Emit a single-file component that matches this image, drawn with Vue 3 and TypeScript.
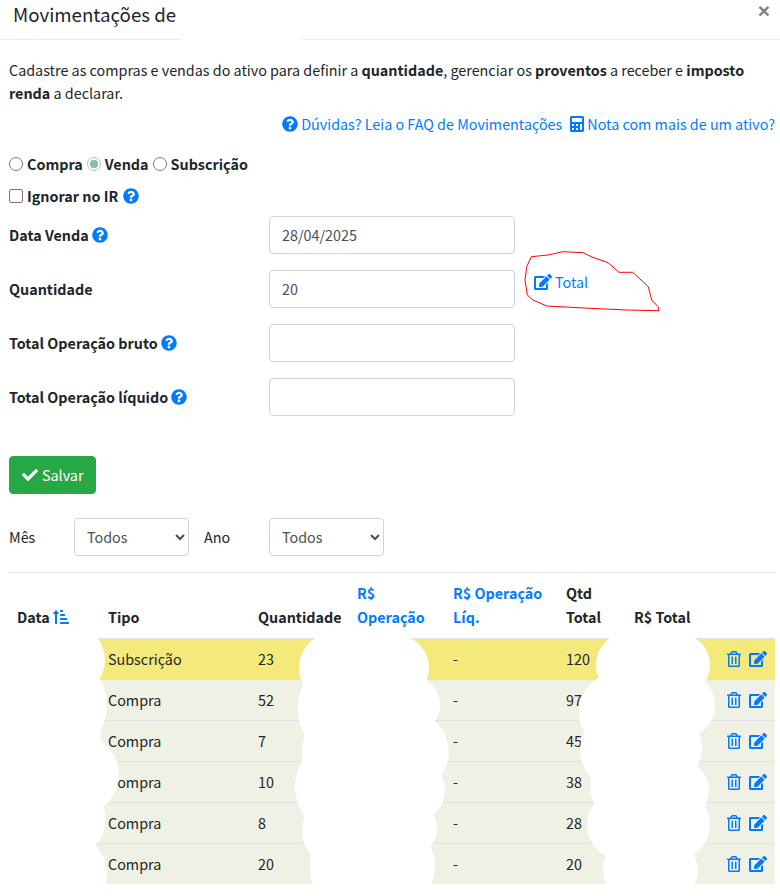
<script setup lang="ts">
interface Row { tipo: string; qtd: string; total: string; highlight?: boolean }
interface Circle { cx: number; cy: number; r: number }
const rows: Row[] = [
  { tipo: 'Subscrição', qtd: '23', total: '120', highlight: true },
  { tipo: 'Compra', qtd: '52', total: '97' },
  { tipo: 'Compra', qtd: '7', total: '45' },
  { tipo: 'Compra', qtd: '10', total: '38' },
  { tipo: 'Compra', qtd: '8', total: '28' },
  { tipo: 'Compra', qtd: '20', total: '20' },
]
const question = 'M504 256c0 136.997-111.043 248-248 248S8 392.997 8 256C8 119.083 119.043 8 256 8s248 111.083 248 248zM262.655 90c-54.497 0-89.255 22.957-116.549 63.758-3.536 5.286-2.353 12.415 2.715 16.258l34.699 26.31c5.205 3.947 12.621 3.008 16.665-2.122 17.864-22.658 30.113-35.797 57.303-35.797 20.429 0 45.698 13.148 45.698 32.958 0 14.976-12.363 22.667-32.534 33.976C247.128 238.528 216 254.941 216 296v4c0 6.627 5.373 12 12 12h56c6.627 0 12-5.373 12-12v-1.333c0-28.462 83.186-29.647 83.186-106.667 0-58.002-60.165-102-116.531-102zM256 338c-25.365 0-46 20.635-46 46 0 25.364 20.635 46 46 46s46-20.636 46-46c0-25.365-20.635-46-46-46z'
const edit = 'M402.6 83.2l90.2 90.2c3.8 3.8 3.8 10 0 13.8L274.4 405.6l-92.8 10.3c-12.4 1.4-22.9-9.1-21.5-21.5l10.3-92.8L388.8 83.2c3.8-3.8 10-3.8 13.8 0zm162-22.9l-48.8-48.8c-15.2-15.2-39.9-15.2-55.2 0l-35.4 35.4c-3.8 3.8-3.8 10 0 13.8l90.2 90.2c3.8 3.8 10 3.8 13.8 0l35.4-35.4c15.2-15.3 15.2-40 0-55.2zM384 346.2V448H64V128h229.8c3.2 0 6.2-1.3 8.5-3.5l40-40c7.6-7.6 2.2-20.5-8.5-20.5H48C21.5 64 0 85.5 0 112v352c0 26.5 21.5 48 48 48h352c26.5 0 48-21.5 48-48V306.2c0-10.7-12.9-16-20.5-8.5l-40 40c-2.2 2.3-3.5 5.3-3.5 8.5z'
const trash = 'M268 416h24a12 12 0 0 0 12-12V188a12 12 0 0 0-12-12h-24a12 12 0 0 0-12 12v216a12 12 0 0 0 12 12zM432 80h-82.41l-34-56.7A48 48 0 0 0 274.41 0H173.59a48 48 0 0 0-41.16 23.3L98.41 80H16A16 16 0 0 0 0 96v16a16 16 0 0 0 16 16h16v336a48 48 0 0 0 48 48h288a48 48 0 0 0 48-48V128h16a16 16 0 0 0 16-16V96a16 16 0 0 0-16-16zM171.84 50.91A6 6 0 0 1 177 48h94a6 6 0 0 1 5.15 2.91L293.61 80H154.39zM368 464H80V128h288zm-212-48h24a12 12 0 0 0 12-12V188a12 12 0 0 0-12-12h-24a12 12 0 0 0-12 12v216a12 12 0 0 0 12 12z'
const check = 'M173.898 439.404l-166.4-166.4c-9.997-9.997-9.997-26.206 0-36.204l36.203-36.204c9.997-9.998 26.207-9.998 36.204 0L192 312.69 432.095 72.596c9.997-9.997 26.207-9.997 36.204 0l36.203 36.204c9.997 9.997 9.997 26.206 0 36.204l-294.4 294.401c-9.998 9.997-26.207 9.997-36.204-.001z'
const calc = 'M400 0H48C22.4 0 0 22.4 0 48v416c0 25.6 22.4 48 48 48h352c25.6 0 48-22.4 48-48V48c0-25.6-22.4-48-48-48zM128 435c0 6.4-6.4 13-12.8 13H76.8c-6.4 0-12.8-6.6-12.8-13v-38.4c0-6.4 6.4-12.8 12.8-12.8h38.4c6.4 0 12.8 6.4 12.8 12.8zm0-128c0 6.4-6.4 12.8-12.8 12.8H76.8c-6.4 0-12.8-6.4-12.8-12.8v-38.4c0-6.4 6.4-12.8 12.8-12.8h38.4c6.4 0 12.8 6.4 12.8 12.8zm128 128c0 6.4-6.4 12.8-12.8 12.8h-38.4c-6.4 0-12.8-6.4-12.8-12.8v-38.4c0-6.4 6.4-12.8 12.8-12.8h38.4c6.4 0 12.8 6.4 12.8 12.8zm0-128c0 6.4-6.4 12.8-12.8 12.8h-38.4c-6.4 0-12.8-6.4-12.8-12.8v-38.4c0-6.4 6.4-12.8 12.8-12.8h38.4c6.4 0 12.8 6.4 12.8 12.8zm128 128c0 6.4-6.4 12.8-12.8 12.8h-38.4c-6.4 0-12.8-6.4-12.8-12.8V268.8c0-6.4 6.4-12.8 12.8-12.8h38.4c6.4 0 12.8 6.4 12.8 12.8zm0-256c0 6.4-6.4 12.8-12.8 12.8H76.8c-6.4 0-12.8-6.4-12.8-12.8V76.8C64 70.4 70.4 64 76.8 64h294.4c6.4 0 12.8 6.4 12.8 12.8z'
const sortUp = 'M240 96h64a16 16 0 0 0 16-16V48a16 16 0 0 0-16-16h-64a16 16 0 0 0-16 16v32a16 16 0 0 0 16 16zm0 128h128a16 16 0 0 0 16-16v-32a16 16 0 0 0-16-16H240a16 16 0 0 0-16 16v32a16 16 0 0 0 16 16zm256 192H240a16 16 0 0 0-16 16v32a16 16 0 0 0 16 16h256a16 16 0 0 0 16-16v-32a16 16 0 0 0-16-16zm-256-64h192a16 16 0 0 0 16-16v-32a16 16 0 0 0-16-16H240a16 16 0 0 0-16 16v32a16 16 0 0 0 16 16zM16 160h48v304a16 16 0 0 0 16 16h32a16 16 0 0 0 16-16V160h48c14.21 0 21.39-17.24 11.31-27.31l-80-96a16 16 0 0 0-22.62 0l-80 96C-5.35 142.74 1.78 160 16 160z'

const mk = (list: number[][]): Circle[] => list.map(([cx, cy, r]) => ({ cx, cy, r }))
const circles: Circle[] = mk([
  // left edge of the white brush strokes
  [70, 660, 35], [57, 705, 50], [61, 735, 40], [79, 775, 40], [71, 820, 35], [62, 875, 45],
  // middle stroke, left side
  [335, 668, 36], [358, 708, 60], [362, 752, 60], [345, 787, 50], [342, 830, 40], [370, 866, 60],
  // middle stroke, right side
  [396, 668, 33], [410, 705, 30], [409, 752, 40], [413, 790, 32], [407, 828, 30], [390, 866, 45],
  // right stroke, left side
  [629, 665, 33], [619, 712, 40], [620, 750, 40], [620, 788, 30], [622, 825, 35], [643, 870, 40],
  // right stroke, right side
  [678, 665, 32], [681, 705, 34], [662, 748, 40], [679, 790, 30], [674, 825, 36], [668, 870, 30],
])
const scribble = 'M531.3 256.7 L548 255 L563 251.7 L583 252.7 L592 257 L608 262.7 L619 272.3 L632.7 272.3 L648.3 286.7 L651.7 300 L658 306.7 L659 310.7 L626.7 310 L590 308.3 L546.7 306 L533 300 L527.3 295 L525 280 L526.7 266.7 Z'
</script>

<template>
  <div class="page">
    <header class="modal-head">
      <h5 class="title">Movimentações de</h5>
      <span class="close">×</span>
    </header>

    <main class="modal-body">
      <p class="intro">
        Cadastre as compras e vendas do ativo para definir a <strong>quantidade</strong>, gerenciar os
        <strong>proventos</strong> a receber e <strong>imposto renda</strong> a declarar.
      </p>

      <div class="links">
        <a class="link">
          <svg class="ic q" viewBox="0 0 512 512"><path :d="question" /></svg>Dúvidas? Leia o FAQ de Movimentações
        </a>
        <a class="link">
          <svg class="ic calc" viewBox="0 0 448 512"><path :d="calc" /></svg>Nota com mais de um ativo?
        </a>
      </div>

      <div class="radios">
        <input type="radio" name="tipo" class="radio" />
        <label>Compra</label>
        <input type="radio" name="tipo" class="radio" checked />
        <label>Venda</label>
        <input type="radio" name="tipo" class="radio" />
        <label>Subscrição</label>
      </div>

      <div class="ignore">
        <input type="checkbox" class="checkbox" />
        <label>Ignorar no IR</label>
        <svg class="ic q" viewBox="0 0 512 512"><path :d="question" /></svg>
      </div>

      <div class="form-row">
        <label>Data Venda <svg class="ic q" viewBox="0 0 512 512"><path :d="question" /></svg></label>
        <input class="control" value="28/04/2025" />
      </div>
      <div class="form-row">
        <label>Quantidade</label>
        <input class="control" value="20" />
        <a class="link total"><svg class="ic edit" viewBox="0 0 576 512"><path :d="edit" /></svg>Total</a>
      </div>
      <div class="form-row">
        <label>Total Operação bruto <svg class="ic q" viewBox="0 0 512 512"><path :d="question" /></svg></label>
        <input class="control" />
      </div>
      <div class="form-row">
        <label>Total Operação líquido <svg class="ic q" viewBox="0 0 512 512"><path :d="question" /></svg></label>
        <input class="control" />
      </div>

      <button class="save" type="button">
        <svg class="ic check" viewBox="0 0 512 512"><path :d="check" /></svg>Salvar
      </button>

      <div class="filters">
        <span class="f-label mes">Mês</span>
        <select class="select"><option>Todos</option></select>
        <span class="f-label ano">Ano</span>
        <select class="select"><option>Todos</option></select>
      </div>

      <table class="grid">
        <colgroup>
          <col class="c1" /><col class="c2" /><col class="c3" /><col class="c4" />
          <col class="c5" /><col class="c6" /><col class="c7" /><col />
        </colgroup>
        <thead>
          <tr>
            <th>Data <svg class="ic sort" viewBox="0 0 512 512"><path :d="sortUp" /></svg></th>
            <th>Tipo</th>
            <th>Quantidade</th>
            <th class="blue">R$ Operação</th>
            <th class="blue">R$ Operação Líq.</th>
            <th>Qtd Total</th>
            <th>R$ Total</th>
            <th></th>
          </tr>
        </thead>
        <tbody>
          <tr v-for="(r, i) in rows" :key="i" :class="{ hl: r.highlight }">
            <td></td>
            <td>{{ r.tipo }}</td>
            <td>{{ r.qtd }}</td>
            <td></td>
            <td>-</td>
            <td>{{ r.total }}</td>
            <td></td>
            <td class="actions">
              <svg class="ic trash" viewBox="0 0 448 512"><path :d="trash" /></svg>
              <svg class="ic edit" viewBox="0 0 576 512"><path :d="edit" /></svg>
            </td>
          </tr>
        </tbody>
      </table>
    </main>

    <svg class="overlay" viewBox="0 0 780 896" width="780" height="896">
      <rect x="181" y="0" width="121" height="42" fill="#fff" />
      <rect x="0" y="636" width="70" height="260" fill="#fff" />
      <rect x="335" y="636" width="62" height="260" fill="#fff" />
      <rect x="625" y="636" width="50" height="260" fill="#fff" />
      <circle v-for="(c, i) in circles" :key="i" :cx="c.cx" :cy="c.cy" :r="c.r" fill="#fff" />
      <path :d="scribble" fill="none" stroke="#f00" stroke-width="1" />
    </svg>
  </div>
</template>

<style scoped>
.page {
  position: relative;
  width: 780px;
  height: 896px;
  overflow: hidden;
  background: #fff;
  color: #212529;
  font-family: "Noto Sans CJK SC", "Noto Sans", sans-serif;
  font-size: 14.35px;
  line-height: 24px;
}
.modal-head {
  height: 40px;
  box-sizing: border-box;
  border-bottom: 1px solid #e9ecef;
  display: flex;
  justify-content: space-between;
  padding: 0 10px 0 13px;
}
.title {
  margin: 0;
  font-size: 18.7px;
  font-weight: 400;
  line-height: 27px;
}
.close {
  font-family: "Liberation Sans", sans-serif;
  font-size: 21px;
  font-weight: 700;
  color: #808080;
  line-height: 21px;
}
.modal-body { padding: 18px 5px 0 9px; }
.intro { margin: 0; line-height: 23px; }
strong { font-weight: 700; }
.links {
  display: flex;
  justify-content: flex-end;
  gap: 8px;
  margin-top: 8px;
}
.link { color: #007bff; display: inline-flex; align-items: center; }
.ic { fill: #007bff; display: inline-block; flex: none; }
.q { width: 16px; height: 16px; vertical-align: -2px; }
.links .q { margin-right: 3px; }
.calc { width: 14px; height: 16px; margin-right: 3px; }
.radios, .ignore { display: flex; align-items: center; font-weight: 700; }
.radios { margin-top: 16px; }
.radio {
  appearance: none;
  box-sizing: border-box;
  width: 14px;
  height: 14px;
  margin: 0 4px 0 0;
  border: 1px solid #767676;
  border-radius: 50%;
  background: #fff;
}
.radio:checked {
  border-color: #9fc9c0;
  background: radial-gradient(circle, #8fbcb0 0 4px, #fff 4.6px);
}
.radios label { margin-right: 4px; }
.ignore { margin-top: 8px; margin-bottom: 8px; }
.checkbox {
  appearance: none;
  box-sizing: border-box;
  width: 14px;
  height: 14px;
  margin: 0 4px 0 0;
  border: 1px solid #767676;
  border-radius: 2px;
  background: #fff;
}
.ignore .q { margin-left: 5px; }
.form-row {
  display: grid;
  grid-template-columns: 260px 246px auto;
  column-gap: 0;
  align-items: center;
  height: 38px;
  margin-bottom: 16px;
  font-weight: 700;
}
.control {
  box-sizing: border-box;
  width: 246px;
  height: 38px;
  padding: 5px 12px 7px;
  border: 1px solid #ced4da;
  border-radius: 4px;
  font: inherit;
  font-weight: 400;
  color: #495057;
  background: #fff;
}
.total { font-weight: 400; margin-left: 19px; margin-top: -14px; }
.edit { width: 18px; height: 16px; }
.total .edit { margin-right: 3px; }
.save {
  display: flex;
  align-items: center;
  box-sizing: border-box;
  width: 87px;
  height: 38px;
  margin-top: 40px;
  padding: 0 12px;
  background: #28a745;
  border: 1px solid #28a745;
  border-radius: 4px;
  color: #fff;
  font: inherit;
}
.check { width: 16px; height: 16px; fill: #fff; margin-right: 4px; }
.filters {
  display: flex;
  align-items: center;
  margin-top: 24px;
  padding-bottom: 16px;
  border-bottom: 1px solid #dee2e6;
}
.f-label { display: block; }
.mes { width: 65px; }
.ano { width: 65px; margin-left: 15px; }
.select {
  box-sizing: border-box;
  width: 115px;
  height: 38px;
  padding: 5px 8px 7px;
  border: 1px solid #ced4da;
  border-radius: 4px;
  background: #fff;
  color: #495057;
  font: inherit;
}
.grid {
  width: 766px;
  table-layout: fixed;
  border-collapse: collapse;
}
.c1 { width: 91px; }
.c2 { width: 150px; }
.c3 { width: 99px; }
.c4 { width: 96px; }
.c5 { width: 113px; }
.c6 { width: 68px; }
.c7 { width: 90px; }
.grid th {
  padding: 8px 8px 9px;
  text-align: left;
  vertical-align: bottom;
  font-weight: 700;
  border-bottom: 1px solid #dee2e6;
}
.grid th.blue { color: #007bff; }
.grid td {
  padding: 8px;
  height: 24px;
  border-top: 1px solid #dee2e6;
}
.grid tbody tr { background: #eef1e4; }
.grid tbody tr.hl { background: #f4ea7c; }
.sort { width: 16px; height: 16px; vertical-align: -2px; }
.actions { text-align: right; white-space: nowrap; padding-left: 0 !important; }
.trash { width: 14px; height: 16px; margin-right: 8px; vertical-align: -2px; }
.actions .edit { vertical-align: -2px; }
.overlay {
  position: absolute;
  left: 0;
  top: 0;
  pointer-events: none;
}
</style>

<style>
html, body { margin: 0; background: #fff; }
</style>
